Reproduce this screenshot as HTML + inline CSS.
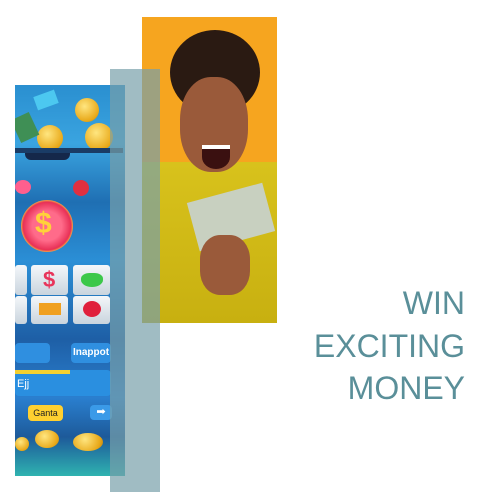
<!DOCTYPE html>
<html><head><style>
html,body{margin:0;padding:0;background:#fff;width:482px;height:504px;overflow:hidden;position:relative;font-family:"Liberation Sans",sans-serif}
.abs{position:absolute}
#game{left:15px;top:85px;width:110px;height:391px;overflow:hidden;background:linear-gradient(180deg,#2a8fd0 0%,#3aa4e0 15%,#1f6fb3 30%,#2b8fd6 45%,#1e5fa6 65%,#2a7fcf 80%,#1d5a9a 90%,#2fb3b0 100%)}
#photo{left:142px;top:17px;width:135px;height:306px;overflow:hidden;background:#f6a51f}
#bar{left:110px;top:69px;width:50px;height:423px;background:rgba(120,160,170,0.7)}
.coin{position:absolute;border-radius:50%;background:radial-gradient(circle at 40% 35%,#ffe680,#e8a818 70%,#b07810)}
.tile{position:absolute;background:linear-gradient(#f4f7fa,#c9d4de);border-radius:3px}
.txt{position:absolute;right:17px;color:#5a8f99;font-size:32px;line-height:1;font-family:"Liberation Sans",sans-serif;text-align:right}
</style></head><body>
<div id="game" class="abs">
  <div class="coin" style="left:60px;top:13px;width:24px;height:24px"></div>
  <div class="coin" style="left:22px;top:40px;width:26px;height:26px"></div>
  <div class="coin" style="left:70px;top:38px;width:28px;height:28px"></div>
  <div class="abs" style="left:20px;top:8px;width:22px;height:14px;background:#4cc8f0;transform:rotate(-20deg)"></div>
  <div class="abs" style="left:0;top:30px;width:20px;height:25px;background:#3f8f55;transform:rotate(-25deg)"></div>
  <div class="abs" style="left:0;top:63px;width:108px;height:5px;background:#1a3c66"></div>
  <div class="abs" style="left:10px;top:68px;width:45px;height:7px;background:#15284a;border-radius:0 0 6px 6px"></div>
  <div class="abs" style="left:6px;top:115px;width:52px;height:52px;border-radius:50%;background:radial-gradient(circle,#ff6b8a 40%,#e83056 65%,#f4c040 72%,#e83056 78%)"></div>
  <div class="abs" style="left:20px;top:122px;font-size:30px;font-weight:bold;color:#ffd23a">$</div>
  <div class="abs" style="left:0;top:95px;width:16px;height:14px;background:#ff5f8e;border-radius:50%"></div>
  <div class="abs" style="left:58px;top:95px;width:16px;height:16px;background:#e03040;border-radius:50%"></div>
  <div class="tile" style="left:0;top:180px;width:12px;height:30px"></div>
  <div class="tile" style="left:16px;top:180px;width:37px;height:30px"></div>
  <div class="tile" style="left:58px;top:180px;width:37px;height:30px"></div>
  <div class="tile" style="left:0;top:211px;width:12px;height:28px"></div>
  <div class="tile" style="left:16px;top:211px;width:37px;height:28px"></div>
  <div class="tile" style="left:58px;top:211px;width:37px;height:28px"></div>
  <div class="abs" style="left:28px;top:182px;font-size:22px;font-weight:bold;color:#e8345a">$</div>
  <div class="abs" style="left:66px;top:188px;width:22px;height:14px;background:#3cc84a;border-radius:40% 40% 50% 50%"></div>
  <div class="abs" style="left:68px;top:216px;width:18px;height:16px;background:#e0203c;border-radius:50%"></div>
  <div class="abs" style="left:24px;top:218px;width:22px;height:12px;background:#f0a020"></div>
  <div class="abs" style="left:0;top:258px;width:35px;height:20px;background:#2f8fe0;border-radius:4px"></div>
  <div class="abs" style="left:56px;top:258px;width:40px;height:20px;background:#2f8fe0;border-radius:4px;color:#fff;font-size:10px;font-weight:bold;line-height:20px;text-align:center">Inappot</div>
  <div class="abs" style="left:0;top:285px;width:96px;height:26px;background:#2a8fe0;border-radius:4px;color:#fff;font-size:11px;padding:8px 0 0 2px;box-sizing:border-box">Ejj</div>
  <div class="abs" style="left:0;top:285px;width:55px;height:4px;background:#f4d030"></div>
  <div class="abs" style="left:13px;top:320px;width:35px;height:16px;background:#ffd030;border-radius:4px;color:#222;font-size:9px;line-height:16px;text-align:center">Ganta</div>
  <div class="abs" style="left:75px;top:320px;width:22px;height:15px;background:#3a9ae8;border-radius:4px;color:#fff;font-size:11px;line-height:15px;text-align:center">➡</div>
  <div class="coin" style="left:20px;top:345px;width:24px;height:18px"></div>
  <div class="coin" style="left:58px;top:348px;width:30px;height:18px"></div>
  <div class="coin" style="left:0;top:352px;width:14px;height:14px"></div>
</div>
<div id="photo" class="abs">
  <div class="abs" style="left:0;top:145px;width:135px;height:161px;background:linear-gradient(#d8c21c,#c8b010)"></div>
  <div class="abs" style="left:28px;top:13px;width:90px;height:85px;border-radius:50%;background:#2a1a12"></div>
  <div class="abs" style="left:38px;top:60px;width:68px;height:95px;border-radius:45%;background:#9a5a3a"></div>
  <div class="abs" style="left:60px;top:128px;width:28px;height:20px;border-radius:0 0 50% 50%;background:#3a1010;border-top:4px solid #fff"></div>
  <div class="abs" style="left:50px;top:175px;width:78px;height:50px;background:#c8d0c0;transform:rotate(-15deg)"></div>
  <div class="abs" style="left:58px;top:218px;width:50px;height:60px;border-radius:40%;background:#9a5a3a"></div>
</div>
<div id="bar" class="abs"></div>
<div class="txt" style="top:287px">WIN</div>
<div class="txt" style="top:330px">EXCITING</div>
<div class="txt" style="top:372px">MONEY</div>
</body></html>
